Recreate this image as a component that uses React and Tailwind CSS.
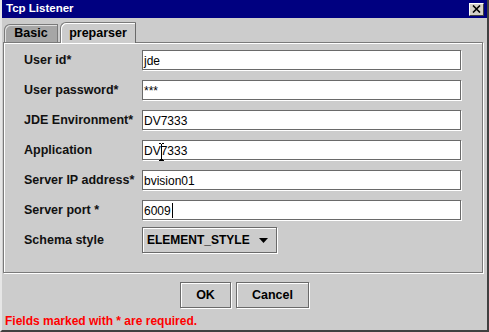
import React from "react";

const rows = [
  { label: "User id*", value: "jde" },
  { label: "User password*", value: "***" },
  { label: "JDE Environment*", value: "DV7333" },
  { label: "Application", value: "DV7333", cursor: true },
  { label: "Server IP address*", value: "bvision01" },
  { label: "Server port *", value: "6009", caret: true },
];

export default function App() {
  return (
    <div className="w-[489px] h-[332px] bg-[#cccccc] border-l-2 border-l-[#e6e6e6] border-r-2 border-r-[#404040] border-b-2 border-b-[#404040] flex flex-col overflow-hidden font-['Liberation_Sans',Arial,sans-serif]">
      {/* Title bar */}
      <div className="h-[18px] shrink-0 bg-[#000080] flex items-center justify-between pl-[4px] pr-[3px]">
        <span className="text-white font-bold text-[11.5px] leading-none">Tcp Listener</span>
        <div className="w-[15px] h-[13px] bg-[#d4d0c8] border border-t-white border-l-white border-r-[#404040] border-b-[#404040] flex items-center justify-center">
          <svg width="9" height="8" viewBox="0 0 9 8">
            <path d="M1 0.5 L8 7.5 M8 0.5 L1 7.5" stroke="#000" strokeWidth="1.6" />
          </svg>
        </div>
      </div>

      {/* Tabs */}
      <div className="h-[20px] mt-[4px] shrink-0 flex items-end pl-[2px] gap-[2px] relative z-10">
        <div className="w-[54px] h-[18px] bg-[#a6a6a6] border border-[#7a7a7a] border-b-0 rounded-tl-[6px] shadow-[inset_1px_1px_0_#e0e0e0] flex items-center justify-center">
          <span className="text-[12.5px] font-bold leading-none text-black">Basic</span>
        </div>
        <div className="w-[76px] h-[21px] -mb-[1px] bg-[#cccccc] border border-t-[#7a7a7a] border-l-[#7a7a7a] border-r-[#6a6a6a] border-b-0 rounded-tl-[6px] shadow-[inset_1px_1px_0_#ffffff] flex items-center justify-center">
          <span className="text-[12.5px] font-bold leading-none text-black">preparser</span>
        </div>
      </div>

      {/* Panel */}
      <div className="ml-[1px] w-[480px] h-[231px] shrink-0 border border-[#7a7a7a] shadow-[inset_1px_1px_0_#fff,1px_1px_0_#fff] pt-[7px] pl-[20px] flex flex-col">
        <div className="flex flex-col gap-[10px]">
          {rows.map((r) => (
            <div key={r.label} className="flex items-center h-[20px]">
              <div className="w-[118px] text-[12.5px] font-bold text-[#111] leading-none">{r.label}</div>
              <div className="relative w-[319px] h-[20px] bg-white border border-[#6a6a6a] shadow-[1px_1px_0_#fff] flex items-center pl-[1px] pt-[1px]">
                <span className="text-[12px] leading-none text-black">{r.value}</span>
                {r.caret && <span className="w-[1px] h-[15px] bg-black ml-[1px]"></span>}
                {r.cursor && (
                  <svg className="absolute left-[15px] top-[2px]" width="7" height="19" viewBox="0 0 7 19">
                    <path d="M1 0.5 H3 M4 0.5 H6 M3.5 1 V17 M1 17.5 H6" stroke="#000" strokeWidth="1" fill="none" />
                    <path d="M1.5 17.5 L3.5 15.5 L5.5 17.5" stroke="#000" strokeWidth="1" fill="none" />
                  </svg>
                )}
              </div>
            </div>
          ))}
        </div>
        <div className="flex items-center mt-[7px] h-[26px]">
          <div className="w-[118px] text-[12.5px] font-bold text-[#111] leading-none">Schema style</div>
          <div className="w-[135px] h-[26px] bg-[#cccccc] border border-[#6a6a6a] shadow-[inset_1px_1px_0_#fff,1px_1px_0_#fff] flex items-center justify-between pl-[4px] pr-[8px]">
            <span className="text-[12px] font-bold leading-none text-black">ELEMENT_STYLE</span>
            <svg width="9" height="5" viewBox="0 0 9 5">
              <path d="M0 0 H9 L4.5 5 Z" fill="#000" />
            </svg>
          </div>
        </div>
      </div>

      {/* Buttons */}
      <div className="mt-[9px] flex justify-center gap-[5px] shrink-0">
        <div className="w-[51px] h-[26px] border border-[#6a6a6a] shadow-[inset_1px_1px_0_#fff,1px_1px_0_#fff] flex items-center justify-center">
          <span className="text-[12.5px] font-bold leading-none text-black">OK</span>
        </div>
        <div className="w-[73px] h-[26px] border border-[#6a6a6a] shadow-[inset_1px_1px_0_#fff,1px_1px_0_#fff] flex items-center justify-center">
          <span className="text-[12.5px] font-bold leading-none text-black">Cancel</span>
        </div>
      </div>

      <div className="mt-[6px] pl-[3px] text-[12px] leading-[15px] font-bold text-[#ff0000]">
        Fields marked with * are required.
      </div>
    </div>
  );
}
